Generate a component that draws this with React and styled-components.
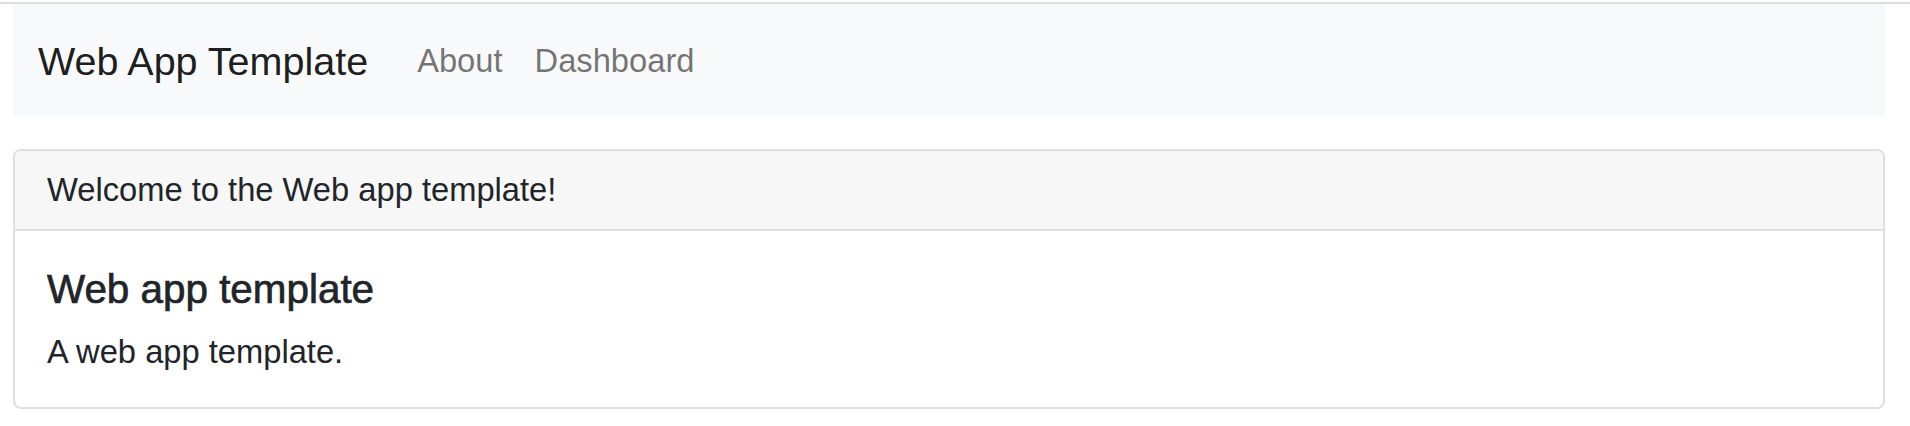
import styled, { createGlobalStyle } from "styled-components";

const GlobalStyle = createGlobalStyle`
  body {
    margin: 0;
    background: #fff;
    font-family: "Liberation Sans", Arial, sans-serif;
    color: #212529;
  }
`;

// Línea gris superior
const TopRule = styled.div`
  margin-top: 2px;
  height: 2px;
  background: #dcdcdc;
`;

const Page = styled.div`
  padding: 0 25px 0 13px;
`;

// Barra de navegación
const Navbar = styled.nav`
  display: flex;
  align-items: center;
  height: 112px;
  padding: 0 25px;
  background: #f8f9fa;
`;

const Brand = styled.a`
  font-size: 39.5px;
  padding-top: 3px;
  color: rgba(0, 0, 0, 0.9);
  text-decoration: none;
  margin-right: 33px;
`;

const NavLinks = styled.div`
  display: flex;
  align-items: center;
`;

const NavLink = styled.a`
  font-size: 32.7px;
  padding: 2px 16px 0;
  color: rgba(0, 0, 0, 0.55);
  text-decoration: none;
`;

// Tarjeta de bienvenida
const Card = styled.div`
  margin-top: 33px;
  border: 2px solid #dfdfdf;
  border-radius: 8px;
  overflow: hidden;
`;

const CardHeader = styled.div`
  padding: 15px 32px;
  font-size: 32.7px;
  line-height: 48px;
  background: #f7f7f7;
  border-bottom: 2px solid #dfdfdf;
`;

const CardBody = styled.div`
  padding: 34px 32px 31px;
`;

const CardTitle = styled.h5`
  margin: 0 0 15px;
  font-size: 40.4px;
  line-height: 48px;
  font-weight: 400;
  -webkit-text-stroke: 0.7px #212529;
`;

const CardText = styled.p`
  margin: 0;
  font-size: 32.7px;
  line-height: 48px;
`;

export default function App() {
  return (
    <>
      <GlobalStyle />
      <TopRule />
      <Page>
        <Navbar>
          <Brand href="#">Web App Template</Brand>
          <NavLinks>
            <NavLink href="#">About</NavLink>
            <NavLink href="#">Dashboard</NavLink>
          </NavLinks>
        </Navbar>
        <Card>
          <CardHeader>Welcome to the Web app template!</CardHeader>
          <CardBody>
            <CardTitle>Web app template</CardTitle>
            <CardText>A web app template.</CardText>
          </CardBody>
        </Card>
      </Page>
    </>
  );
}
